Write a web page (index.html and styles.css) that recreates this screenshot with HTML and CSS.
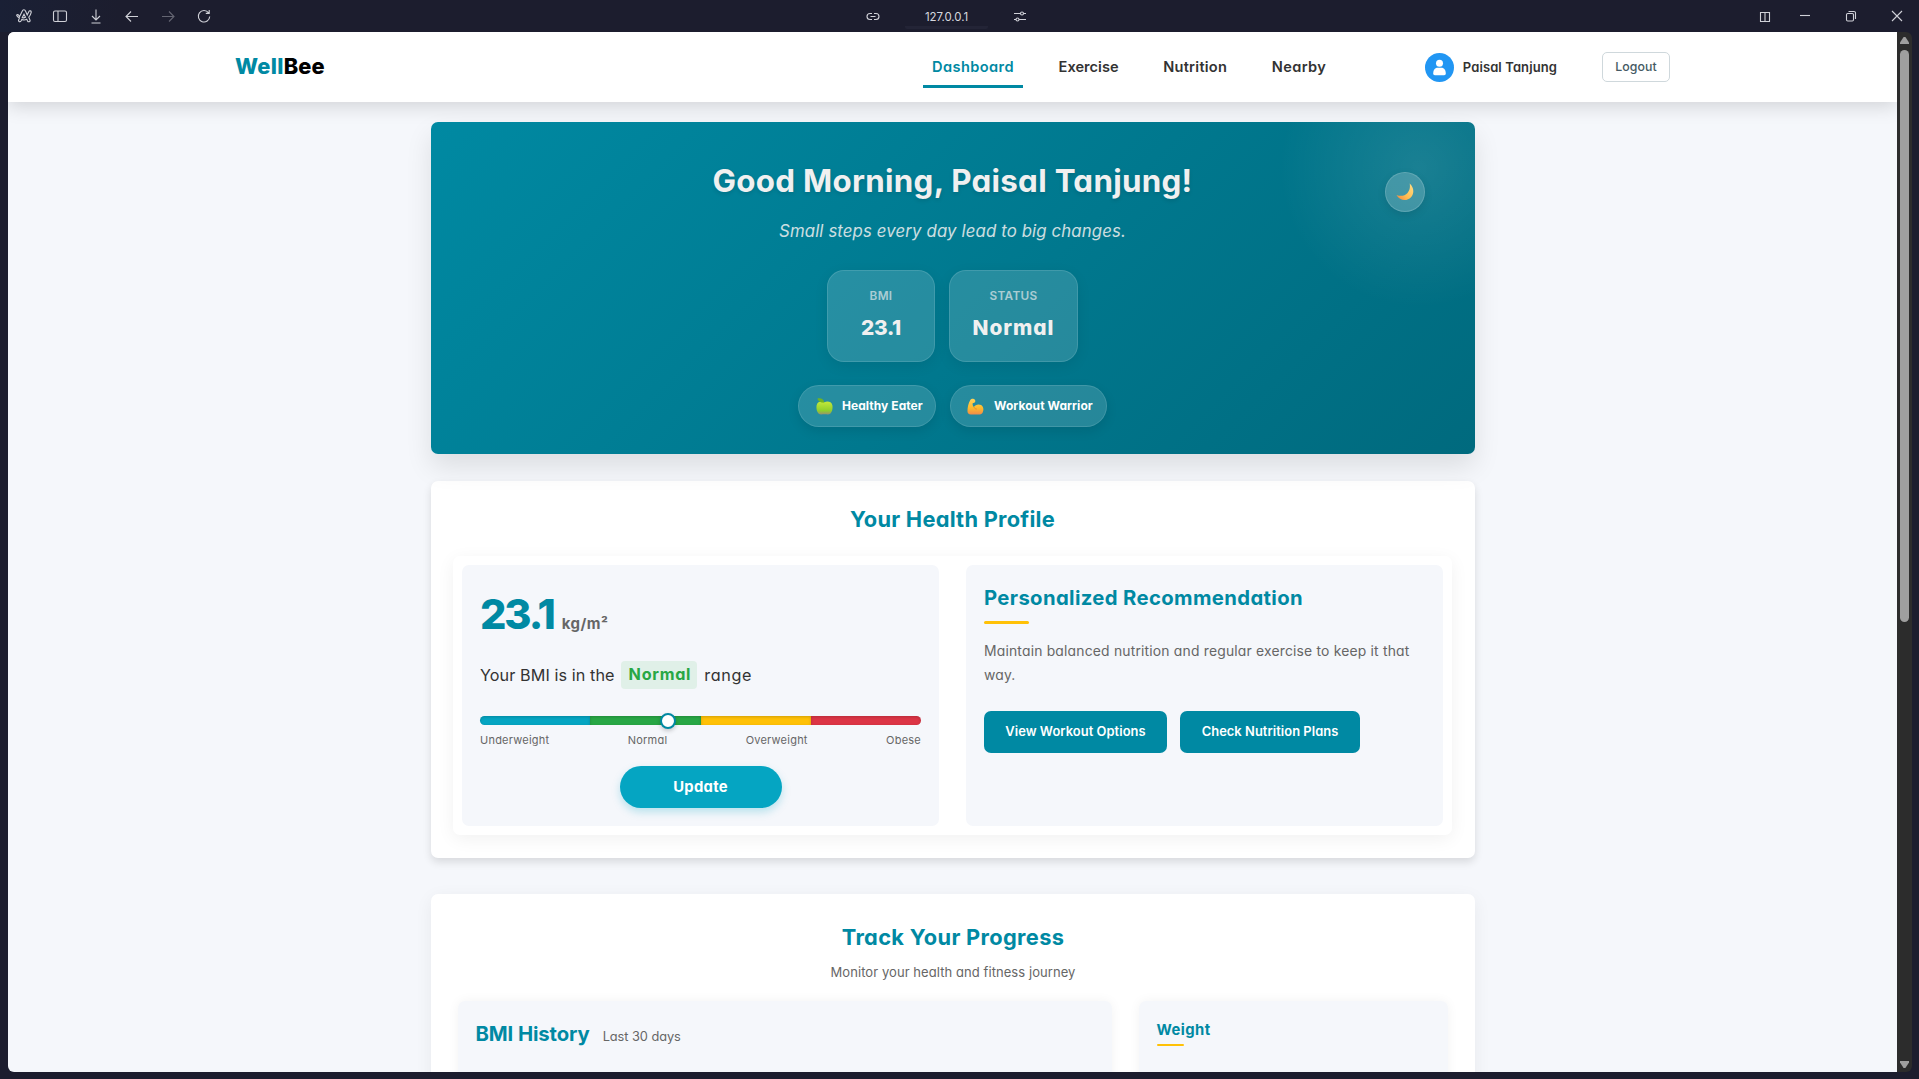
FILE: index.html
```html
<!DOCTYPE html>
<html lang="en">
<head>
<meta charset="utf-8">
<title>WellBee</title>
<link rel="stylesheet" href="styles.css">
</head>
<body>
<div class="toolbar">
  <div class="tools">
    <svg class="ico" viewBox="0 0 16 16"><path d="M.6 7.200c.5-.9 1.600-.7 2 .1l.9 1.400L6.300 3c.5-1.700 2.700-1.700 3.200 0l1.700 4 1.700-3.600c.6-1.200 2.600-.5 2.300.9-.4 1.800-1.200 3.400-2.400 4.800l1.200 3c.4 1.600-1.600 2.300-2.400 1l-.9-1.800c-1.500.8-3.300.9-4.900.2l-.8 1.500c-.8 1.400-2.900.6-2.400-1l.8-1.900C2 9.300.9 8.400.6 7.200z"/><path d="M6.200 9.700L8 6.300l1.500 3c-1 .5-2.100.7-3.300.4z"/></svg>
    <svg class="ico" viewBox="0 0 16 16"><rect x="1.500" y="3" width="13" height="10.500" rx="1.500"/><path d="M6 3v10.500"/></svg>
    <svg class="ico" viewBox="0 0 16 16"><path d="M8 1.500v10M4 8l4 4 4-4M3.500 15h9"/></svg>
    <svg class="ico" viewBox="0 0 16 16"><path d="M14 8.500H2.500M7 3.500l-5 5 5 5"/></svg>
    <svg class="ico dim" viewBox="0 0 16 16"><path d="M2 8.500h11.500M9 3.500l5 5-5 5"/></svg>
    <svg class="ico" viewBox="0 0 16 16"><path d="M12.600 4.900A5.700 5.700 0 1 0 13.700 8.500M13.200 2v3.400H9.800"/></svg>
  </div>
  <div class="address">
    <svg class="ico" viewBox="0 0 16 16"><path d="M7 5.500H5a3 3 0 0 0 0 6h2M9 5.500h2a3 3 0 0 1 0 6H9M5.500 8.500h5"/></svg>
    <span class="url">127.0.0.1</span>
    <svg class="ico" viewBox="0 0 16 16"><path d="M2 5.500h6.500M11.500 5.500H14M2 11.500h2M7 11.500h7"/><circle cx="10" cy="5.500" r="1.500"/><circle cx="5.500" cy="11.500" r="1.500"/></svg>
  </div>
  <div class="window-controls">
    <svg class="ico split" viewBox="0 0 16 16"><path d="M3.500 4.500h9v9h-9zM8 4.500v9"/></svg>
    <svg class="ico" viewBox="0 0 16 16"><path d="M3 7.500h10"/></svg>
    <svg class="ico" viewBox="0 0 16 16"><rect x="3.500" y="5.500" width="7" height="7.500" rx="1.200"/><path d="M5.500 3.500H11A1.500 1.500 0 0 1 12.500 5v6"/></svg>
    <svg class="ico" viewBox="0 0 16 16"><path d="M3 3l10 10M13 3L3 13"/></svg>
  </div>
</div>
<div class="window">
<div class="page">
  <header class="site-header">
    <div class="logo">Well<span class="logo-dark">Bee</span></div>
    <nav class="nav">
      <a class="nav-link dashboard active">Dashboard</a>
      <a class="nav-link exercise">Exercise</a>
      <a class="nav-link nutrition">Nutrition</a>
      <a class="nav-link nearby">Nearby</a>
    </nav>
    <div class="user">
      <svg class="avatar" viewBox="0 0 29 29"><circle cx="14.500" cy="14.500" r="14.500" fill="#2196f3"/><circle cx="14.500" cy="10.300" r="3.500" fill="#fff"/><path d="M8.200 20.500c0-3.600 2-5.700 4.300-5.700h4c2.300 0 4.300 2.100 4.300 5.700 0 1-.7 1.700-1.700 1.700H9.900c-1 0-1.700-.7-1.700-1.700z" fill="#fff"/></svg>
      <span class="user-name">Paisal Tanjung</span>
    </div>
    <button class="logout">Logout</button>
  </header>
  <main class="main">
    <section class="hero">
      <h1 class="hero-title">Good Morning, Paisal Tanjung!</h1>
      <p class="hero-quote">Small steps every day lead to big changes.</p>
      <div class="stats">
        <div class="stat stat-bmi"><div class="stat-label">BMI</div><div class="stat-value">23.1</div></div>
        <div class="stat stat-status"><div class="stat-label">STATUS</div><div class="stat-value">Normal</div></div>
      </div>
      <div class="badges">
        <div class="badge badge-eater">
          <svg class="emoji" viewBox="0 0 18 18"><defs><linearGradient id="apple" x1="0" y1="0" x2="0" y2="1"><stop offset="0" stop-color="#c3e83a"/><stop offset=".7" stop-color="#8fcf2c"/><stop offset="1" stop-color="#9a8f72"/></linearGradient></defs><path d="M9 4.500c2-1.200 7.500-1.500 8.400 3.500.6 4.500-1 9.500-4.800 9.500-1.300 0-2.200-.2-3.600-.2s-2.300.2-3.600.2C1.600 17.500 0 12.500.6 8 1.500 3 7 3.300 9 4.500z" fill="url(#apple)"/><path d="M8.700 4.800C7 5.300 2.500 4.500 1.500.6c3.200-1 6.700.2 7.200 4.200z" fill="#6fb324"/></svg>
          <span class="badge-text">Healthy Eater</span></div>
        <div class="badge badge-warrior">
          <svg class="emoji" viewBox="0 0 18 18"><defs><linearGradient id="arm" x1="0" y1="0" x2="0" y2="1"><stop offset="0" stop-color="#ffd35a"/><stop offset=".6" stop-color="#fdb92c"/><stop offset="1" stop-color="#f08a4b"/></linearGradient></defs><path d="M3.500 2.200C4.500.6 7.500.4 8.500 2c.6 1 .3 2.400-.8 3L6 5.600c-.3 1.400.2 3 1.300 4C8.500 7.300 12 5.900 15 7.500c2.600 1.500 3 5.500 1.500 8-.6 1.200-2.100 2-4 2H4c-2.300 0-3.500-1.500-3.500-3.500C.5 10 1.500 5.500 3.500 2.200z" fill="url(#arm)"/><path d="M7.300 9.600c.6 1.300 1.500 2 3 2.100" fill="none" stroke="#e88a2a"/></svg>
          <span class="badge-text">Workout Warrior</span></div>
      </div>
      <button class="theme-toggle" aria-label="Theme"><svg viewBox="0 0 18 18" width="18" height="18"><defs><linearGradient id="moon" x1="1" y1="0" x2="0" y2="1"><stop offset="0" stop-color="#ffe08a"/><stop offset=".6" stop-color="#ffbc50"/><stop offset="1" stop-color="#ef8340"/></linearGradient></defs><path d="M13.700.5c4.500 4 4.600 10 1.300 13.700C11 18.500 3.800 18 .5 12c4 1.600 8.300 1 11-2 2.300-2.600 2.800-6 2.200-9.500z" fill="url(#moon)"/></svg></button>
    </section>
    <section class="card profile">
      <h2 class="section-title">Your Health Profile</h2>
      <div class="profile-panel">
        <div class="box bmi-box">
          <div class="bmi-number"><span class="bmi-value">23.1</span><span class="bmi-unit">kg/m²</span></div>
          <div class="bmi-text"><span>Your BMI is in the</span><span class="pill">Normal</span><span class="range">range</span></div>
          <div class="scale"><i class="seg under"></i><i class="seg normal"></i><i class="seg over"></i><i class="seg obese"></i><b class="thumb"></b></div>
          <div class="scale-labels"><span>Underweight</span><span>Normal</span><span>Overweight</span><span>Obese</span></div>
          <button class="update">Update</button>
        </div>
        <div class="box rec-box">
          <h3 class="box-title rec-title underlined">Personalized Recommendation</h3>
          <p class="rec-text">Maintain balanced nutrition and regular exercise to keep it that<br>way.</p>
          <div class="actions"><button class="action workout">View Workout Options</button><button class="action plans">Check Nutrition Plans</button></div>
        </div>
      </div>
    </section>
    <section class="card progress">
      <h2 class="section-title">Track Your Progress</h2>
      <p class="section-sub">Monitor your health and fitness journey</p>
      <div class="charts">
        <div class="box history"><h3 class="box-title">BMI History</h3><span class="period">Last 30 days</span></div>
        <div class="box weight"><h4 class="weight-title underlined">Weight</h4></div>
      </div>
    </section>
  </main>
</div>
<div class="scrollbar"><i class="arrow up"></i><i class="track-thumb"></i><i class="arrow down"></i></div>
</div>
</body>
</html>
```
FILE: styles.css
```css
* { box-sizing: border-box; margin: 0; padding: 0; }
body {
  width: 1919px; height: 1079px; overflow: hidden;
  background: #1c1d2e;
  font-family: Inter, "Liberation Sans", sans-serif;
  font-feature-settings: "cv11" 1, "calt" 0;
  color: #333;
}
button { font: inherit; font-feature-settings: inherit; border: 0; }

/* browser toolbar */
.toolbar { height: 32px; display: grid; grid-template-columns: 1fr auto 1fr; align-items: center; background: linear-gradient(90deg, #1a2035, #1c1d2e 120px); color: #d6d7de; }
.ico { width: 16px; height: 16px; fill: none; stroke: #d0d1d8; stroke-width: 1.1; display: block; }
.dim { opacity: .4; }
.tools { display: flex; gap: 20px; padding-left: 16px; }
.address { display: flex; align-items: center; font-size: 11.5px; margin-right: 26px; height: 32px; }
.url { width: 83px; margin: 0 24px; height: 29px; line-height: 35px; text-align: center; letter-spacing: -.08px; white-space: nowrap; border-bottom: 3px solid #232436; border-radius: 2px; align-self: flex-start; }
.window-controls { display: flex; justify-content: flex-end; gap: 30px; padding-right: 14px; }
.split { margin-right: -6px; }

/* window and scrollbar */
.window { display: flex; height: 1040px; padding: 0 7px 0 8px; }
.page { flex: 1; background: #f5f7fb; overflow: hidden; border-radius: 6px 0 0 6px; }
.scrollbar { width: 15px; background: #2c2c2c; border-radius: 0 6px 6px 0; display: flex; flex-direction: column; align-items: center; padding: 5px 0 4px; }
.arrow { width: 9px; height: 7px; background: #9f9f9f; }
.up { clip-path: polygon(40% 0, 60% 0, 100% 80%, 100% 100%, 0 100%, 0 80%); }
.down { clip-path: polygon(0 0, 100% 0, 100% 20%, 60% 100%, 40% 100%, 0 20%); margin-top: auto; }
.track-thumb { width: 9px; height: 572px; border-radius: 5px; background: #9f9f9f; margin-top: 6px; }

/* site header */
.site-header { position: relative; height: 70px; background: #fff; box-shadow: 0 4px 18px rgba(0,0,0,.15); display: flex; align-items: center; padding: 0 227px; white-space: nowrap; }
.logo { font-size: 21.8px; font-weight: 800; color: #0089a3; width: 688px; letter-spacing: .3px; padding-bottom: 2px; }
.logo-dark { color: #000; letter-spacing: .1px; }
.nav { display: flex; gap: 26.6px; }
.nav-link { height: 42px; padding: 0 9px; line-height: 43px; font-size: 14.6px; font-weight: 600; }
.dashboard { letter-spacing: .413px; }
.exercise { letter-spacing: .012px; }
.nutrition { letter-spacing: .253px; }
.nearby { letter-spacing: .372px; }
.active { color: #0089a3; border-bottom: 3px solid #0089a3; }
.user { display: flex; align-items: center; gap: 9px; margin-left: auto; font-size: 13px; font-weight: 600; letter-spacing: .1px; }
.user-name { padding-bottom: 1px; }
.avatar { width: 29px; height: 29px; }
.logout { margin-left: 45px; width: 68px; height: 30px; padding-bottom: 1px; border: 1px solid #cfd8dc; border-radius: 5px; background: #fff; color: #455a64; font-size: 12.3px; font-weight: 500; letter-spacing: .081px; }

/* greeting */
.main { width: 1044px; margin: 20px 0 0 423px; }
.hero { position: relative; height: 332px; border-radius: 7px; padding: 37px 1px 0 0; text-align: center; color: #f0f0f0; box-shadow: 0 13px 27px rgba(0,0,0,.1);
  background: radial-gradient(circle 140px at 988px 46px, rgba(255,255,255,.1), transparent), linear-gradient(135deg, #0089a2, #00788e 55%, #007085 80%, #006a7e); }
.hero-title { font-size: 31.3px; line-height: 45px; font-weight: 750; letter-spacing: .3px; text-shadow: 0 2px 4px rgba(0,0,0,.12); }
.hero-quote { margin-top: 14px; font-size: 16.8px; line-height: 26px; font-style: italic; letter-spacing: .13px; opacity: .85; }
.stats { display: flex; justify-content: center; gap: 14px; margin-top: 26px; }
.stat { height: 92px; padding-top: 16px; border-radius: 17px; background: rgba(255,255,255,.15); border: 1px solid rgba(255,255,255,.12); box-shadow: 0 4px 14px rgba(0,0,0,.08); }
.stat-bmi { width: 108px; }
.stat-status { width: 129px; }
.stat-label { font-size: 11.8px; line-height: 18px; font-weight: 600; letter-spacing: .33px; opacity: .65; }
.stat-value { font-size: 20.8px; line-height: 30px; margin-top: 8px; font-weight: 800; letter-spacing: -.277px; }
.stat-status .stat-value { letter-spacing: .99px; }
.badges { display: flex; justify-content: center; gap: 14px; margin-top: 23px; }
.badge { height: 42px; display: flex; align-items: center; gap: 9px; padding-left: 17px; border-radius: 21px; background: rgba(255,255,255,.15); border: 1px solid rgba(255,255,255,.12); box-shadow: 0 4px 12px rgba(0,0,0,.1); color: #fff; font-size: 12px; font-weight: 700; letter-spacing: .055px; white-space: nowrap; }
.badge-text { padding-bottom: 2px; }
.badge-eater { width: 138px; }
.badge-warrior { width: 157px; padding-left: 16px; gap: 10px; }
.emoji { width: 17px; height: 17px; }
.theme-toggle { position: absolute; right: 50px; top: 50px; width: 40px; height: 40px; border-radius: 50%; background: rgba(255,255,255,.2); border: 1px solid rgba(255,255,255,.15); box-shadow: 0 3px 9px rgba(0,0,0,.1); display: grid; place-items: center; }

/* health profile */
.card { background: #fff; border-radius: 7px; box-shadow: 0 4px 9px rgba(0,0,0,.12); }
.section-title { font-size: 21.8px; line-height: 32px; font-weight: 750; letter-spacing: .262px; color: #0089a3; text-align: center; }
.profile { height: 377px; margin-top: 27px; padding: 22px 23px 0 22px; }
.profile-panel { height: 279px; margin-top: 21px; padding: 9px; display: grid; grid-template-columns: 1fr 1fr; gap: 27px; border-radius: 7px; box-shadow: 0 4px 18px rgba(0,0,0,.06); }
.box { background: #f5f7fb; border-radius: 7px; }
.bmi-box { padding: 23px 18px 0; display: flex; flex-direction: column; }
.bmi-number { height: 52px; line-height: 52px; display: flex; align-items: baseline; gap: 8px; }
.bmi-value { font-size: 41.5px; font-weight: 800; letter-spacing: -2.1px; color: #0089a3; }
.bmi-unit { font-size: 15px; font-weight: 650; letter-spacing: .5px; color: #666; }
.bmi-text { height: 28px; margin-top: 21px; display: flex; align-items: center; font-size: 16.2px; letter-spacing: .08px; white-space: nowrap; }
.pill { height: 28px; line-height: 27px; padding: 0 6px 0 8px; margin: 0 7px 0 6px; border-radius: 4px; background: #e0f0e8; color: #28a745; font-weight: 750; letter-spacing: .7px; }
.range { letter-spacing: .666px; }
.scale { position: relative; height: 9px; margin-top: 27px; display: flex; border-radius: 5px; }
.seg { flex: 1; box-shadow: inset 0 1px 3px rgba(0,0,0,.18); }
.under { background: #05a5c2; border-radius: 5px 0 0 5px; }
.normal { background: #28a745; }
.over { background: #ffc107; }
.obese { background: #dc3545; border-radius: 0 5px 5px 0; }
.thumb { position: absolute; left: 180px; top: -3.5px; width: 16px; height: 16px; border-radius: 50%; background: #fff; border: 2px solid #0089a3; box-shadow: 0 2px 4px rgba(0,0,0,.2); }
.scale-labels { display: flex; justify-content: space-between; margin-top: 7px; font-size: 11px; line-height: 16px; letter-spacing: .23px; color: #666; }
.update { align-self: center; width: 162px; height: 42px; padding-bottom: 1px; margin-top: 18px; border-radius: 21px; background: #05a5c2; color: #fff; font-size: 14.8px; font-weight: 700; letter-spacing: .266px; box-shadow: 0 4px 9px rgba(5,165,194,.25); }
.rec-box { padding: 19px 18px 0; }
.box-title { font-size: 20.3px; line-height: 28px; font-weight: 750; letter-spacing: -.1px; color: #0089a3; }
.rec-title { letter-spacing: .363px; }
.underlined::after { content: ""; display: block; width: 45px; height: 3px; margin-top: 9px; border-radius: 2px; background: #ffc107; }
.rec-text { margin-top: 15px; font-size: 13.9px; line-height: 24px; letter-spacing: .185px; color: #666; white-space: nowrap; }
.actions { display: flex; gap: 13px; margin-top: 24px; }
.action { height: 42px; padding-bottom: 2px; border-radius: 7px; background: #0089a3; color: #fff; font-size: 12.9px; font-weight: 600; letter-spacing: .055px; white-space: nowrap; }
.workout { width: 183px; }
.plans { width: 180px; }

/* progress */
.progress { height: 300px; margin-top: 36px; padding: 27px 27px 0; box-shadow: 0 4px 18px rgba(0,0,0,.06); }
.progress .section-title { letter-spacing: .347px; }
.section-sub { margin-top: 9px; font-size: 13px; line-height: 20px; letter-spacing: .071px; color: #666; text-align: center; }
.charts { height: 200px; margin-top: 19px; display: grid; grid-template-columns: 654px 309px; gap: 27px; }
.charts .box { padding: 19px 18px 0 17.5px; box-shadow: 0 0 12px rgba(0,0,0,.05); }
.history { display: flex; align-items: baseline; gap: 13px; }
.period { font-size: 12.8px; letter-spacing: -.06px; color: #666; }
.weight-title { font-size: 14.8px; line-height: 20px; font-weight: 750; letter-spacing: .43px; color: #0089a3; }
.weight-title::after { width: 27px; height: 2px; margin-top: 4px; }
```
